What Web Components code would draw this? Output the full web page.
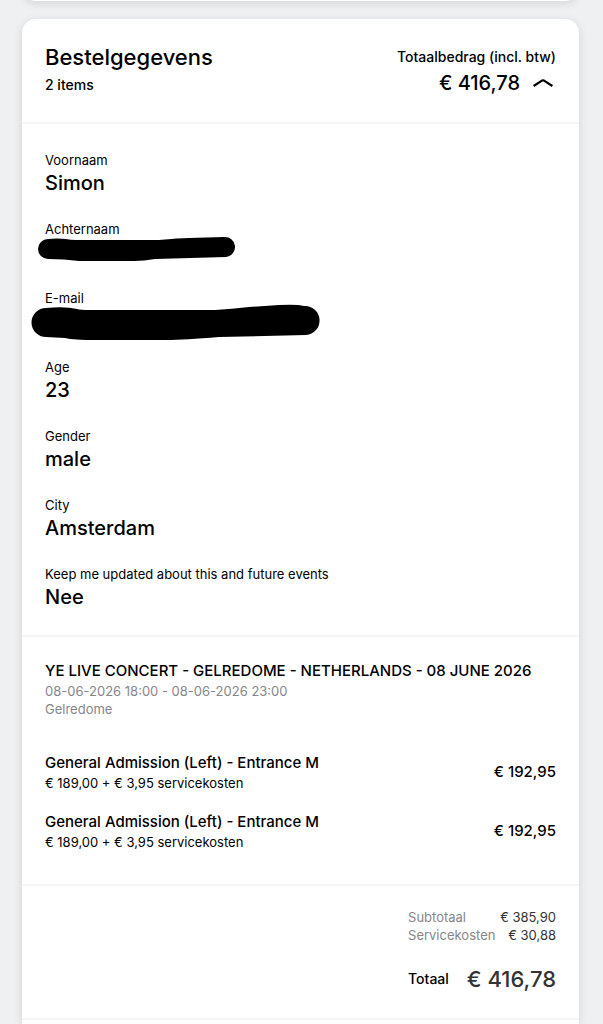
<!DOCTYPE html>
<html lang="nl">
<head>
<meta charset="utf-8">
<meta name="viewport" content="width=device-width, initial-scale=1">
<title>Bestelgegevens</title>
<style>
  body {
    margin: 0;
    background: #eff0f2;
    color: #000;
    font-family: Inter, "Liberation Sans", sans-serif;
  }
</style>
</head>
<body>
<order-page></order-page>

<script>
(() => {

  const fields = [
    { label: 'Voornaam', value: 'Simon' },
    { label: 'Achternaam', mark: 'short' },
    { label: 'E-mail', mark: 'long' },
    { label: 'Age', value: '23' },
    { label: 'Gender', value: 'male' },
    { label: 'City', value: 'Amsterdam' },
    { label: 'Keep me updated about this and future events', value: 'Nee' },
  ]

  const tickets = [
    { name: 'General Admission (Left) - Entrance M', detail: '€ 189,00 + € 3,95 servicekosten', price: '€ 192,95' },
    { name: 'General Admission (Left) - Entrance M', detail: '€ 189,00 + € 3,95 servicekosten', price: '€ 192,95' },
  ]

  const marks = {
    short: 'M19 7Q28 6 37 7Q41 8 47 8L130 8Q150 6 160 6L195 5A10 10 0 0 1 197 25L126 27Q115 29 105 29L50 29Q35 27 19 27A10 10 0 0 1 19 7Z',
    long: 'M17 7Q36 5 48 8Q52 9 60 9L186 9Q203 8 220 6L250 4Q268 3 275 5A14 14 0 0 1 277 34L190 36Q155 39 138 39L66 39Q45 39 36 37L17 36A14 14 0 0 1 17 7Z',
  }

  class OrderPage extends HTMLElement {
    constructor() {
      super()
      this.attachShadow({ mode: 'open' })
      this.shadowRoot.innerHTML = `
      <style>
        :host {
          display: flex;
          flex-direction: column;
          gap: 18px;
          min-height: 100vh;
          box-sizing: border-box;
          padding: 0 24px 0 22px;
          overflow: hidden;
        }
        .previous {
          height: 20px;
          margin-top: -19px;
        }
        .order {
          flex: 1;
        }
      </style>
      <order-card class="previous" end></order-card>
      <order-card class="order" start>
        <order-header count="2 items" amount="€ 416,78">Bestelgegevens</order-header>
        <order-section>
          ${fields.map(data => this.field(data)).join('')}
        </order-section>
        <order-section tickets>
          <order-event date="08-06-2026 18:00 - 08-06-2026 23:00" place="Gelredome">YE LIVE CONCERT - GELREDOME - NETHERLANDS - 08 JUNE 2026</order-event>
          ${tickets.map(data => this.ticket(data)).join('')}
        </order-section>
        <order-totals></order-totals>
      </order-card>
      `
    }

    field(data) {
      const value = data.mark ? `<redacted-value shape="${data.mark}"></redacted-value>` : data.value
      return `<order-field label="${data.label}">${value}</order-field>`
    }

    ticket(data) {
      return `<order-ticket detail="${data.detail}" price="${data.price}">${data.name}</order-ticket>`
    }
  }

  class OrderCard extends HTMLElement {
    constructor() {
      super()
      this.attachShadow({ mode: 'open' })
      this.shadowRoot.innerHTML = `
      <style>
        :host {
          display: block;
          background: #fff;
          box-shadow: 0 2px 10px rgba(0, 0, 0, .12);
        }
        :host([start]) {
          border-radius: 14px 14px 0 0;
        }
        :host([end]) {
          border-radius: 0 0 14px 14px;
        }
      </style>
      <slot></slot>
      `
    }
  }

  class OrderHeader extends HTMLElement {
    connectedCallback() {
      this.attachShadow({ mode: 'open' })
      this.shadowRoot.innerHTML = `
      <style>
        :host {
          display: block;
          border-bottom: 2px solid #f5f5f6;
        }
        header {
          display: flex;
          justify-content: space-between;
          padding: 24px 23px 23px;
          font-weight: 500;
        }
        h1, p {
          margin: 0;
          line-height: 28px;
        }
        h1 {
          font-size: 22px;
          font-weight: 500;
        }
        p {
          font-size: 14px;
        }
        .total {
          text-align: right;
        }
        .amount {
          display: flex;
          align-items: center;
          justify-content: flex-end;
          gap: 10px;
          font-size: 20px;
          line-height: 24px;
        }
        button {
          display: flex;
          padding: 0 3px;
          border: 0;
          background: none;
          color: inherit;
          cursor: pointer;
        }
      </style>
      <header>
        <div>
          <h1><slot></slot></h1>
          <p>${this.getAttribute('count')}</p>
        </div>
        <div class="total">
          <p>Totaalbedrag (incl. btw)</p>
          <div class="amount">
            <span>${this.getAttribute('amount')}</span>
            <button type="button" aria-label="Inklappen" aria-expanded="true">
              <svg width="20" height="10" viewBox="0 0 20 10" fill="none" stroke="currentColor" stroke-width="2.2" stroke-linejoin="round">
                <path d="M.6 8 9 2.6Q10 2.1 11 2.6L19.4 8"/>
              </svg>
            </button>
          </div>
        </div>
      </header>
      `
    }
  }

  class OrderSection extends HTMLElement {
    constructor() {
      super()
      this.attachShadow({ mode: 'open' })
      this.shadowRoot.innerHTML = `
      <style>
        :host {
          display: flex;
          flex-direction: column;
          gap: 22px;
          padding: 27px 23px 23px;
          border-bottom: 2px solid #f5f5f6;
        }
        :host([tickets]) {
          gap: 19px;
          padding: 23px 23px 33px;
        }
      </style>
      <slot></slot>
      `
    }
  }

  class OrderField extends HTMLElement {
    connectedCallback() {
      this.attachShadow({ mode: 'open' })
      this.shadowRoot.innerHTML = `
      <style>
        :host {
          display: block;
        }
        dl, dd {
          margin: 0;
        }
        dt {
          font-size: 13px;
          line-height: 18px;
        }
        dd {
          min-height: 29px;
          font-size: 20px;
          font-weight: 500;
          line-height: 29px;
        }
      </style>
      <dl>
        <dt>${this.getAttribute('label')}</dt>
        <dd><slot></slot></dd>
      </dl>
      `
    }
  }

  // marker stroke over the value, a bit larger than its line
  class RedactedValue extends HTMLElement {
    connectedCallback() {
      this.attachShadow({ mode: 'open' })
      this.shadowRoot.innerHTML = `
      <style>
        :host {
          display: block;
          position: relative;
        }
        svg {
          position: absolute;
          top: -6px;
          left: -16px;
        }
      </style>
      <svg width="300" height="42" viewBox="0 0 300 42" aria-hidden="true">
        <path d="${marks[this.getAttribute('shape')]}" fill="#000"/>
      </svg>
      `
    }
  }

  class OrderEvent extends HTMLElement {
    connectedCallback() {
      this.attachShadow({ mode: 'open' })
      this.shadowRoot.innerHTML = `
      <style>
        :host {
          display: block;
          padding-bottom: 15px;
        }
        h2, p {
          margin: 0;
        }
        h2 {
          font-size: 15px;
          font-weight: 500;
          line-height: 22px;
        }
        p {
          color: #86868a;
          font-size: 13px;
          line-height: 18px;
        }
      </style>
      <h2><slot></slot></h2>
      <p>${this.getAttribute('date')}</p>
      <p>${this.getAttribute('place')}</p>
      `
    }
  }

  class OrderTicket extends HTMLElement {
    connectedCallback() {
      this.attachShadow({ mode: 'open' })
      this.shadowRoot.innerHTML = `
      <style>
        :host {
          display: flex;
          align-items: center;
          justify-content: space-between;
          gap: 16px;
        }
        h3, p {
          margin: 0;
        }
        h3, .price {
          font-size: 15px;
          font-weight: 500;
          line-height: 22px;
        }
        p {
          font-size: 13px;
          line-height: 18px;
        }
        .price {
          white-space: nowrap;
        }
      </style>
      <div>
        <h3><slot></slot></h3>
        <p>${this.getAttribute('detail')}</p>
      </div>
      <span class="price">${this.getAttribute('price')}</span>
      `
    }
  }

  class OrderTotals extends HTMLElement {
    constructor() {
      super()
      this.attachShadow({ mode: 'open' })
      this.shadowRoot.innerHTML = `
      <style>
        :host {
          display: flex;
          justify-content: flex-end;
          padding: 22px 23px 23px;
          border-bottom: 2px solid #f5f5f6;
        }
        table, tbody, tfoot {
          display: block;
        }
        table {
          color: #333;
          font-size: 13px;
          line-height: 18px;
          white-space: nowrap;
        }
        tr {
          display: flex;
          justify-content: space-between;
          gap: 12px;
        }
        th, td {
          padding: 0;
        }
        th {
          color: #86868a;
          font-weight: 400;
        }
        tfoot {
          padding-top: 19px;
          line-height: 32px;
        }
        tfoot tr {
          gap: 18px;
        }
        tfoot th, tfoot td {
          font-weight: 500;
        }
        tfoot th {
          color: #000;
          font-size: 14px;
        }
        tfoot td {
          font-size: 22px;
        }
      </style>
      <table>
        <tbody>
          <tr><th scope="row">Subtotaal</th><td>€ 385,90</td></tr>
          <tr><th scope="row">Servicekosten</th><td>€ 30,88</td></tr>
        </tbody>
        <tfoot>
          <tr><th scope="row">Totaal</th><td>€ 416,78</td></tr>
        </tfoot>
      </table>
      `
    }
  }

  customElements.define('order-card', OrderCard)
  customElements.define('order-header', OrderHeader)
  customElements.define('order-section', OrderSection)
  customElements.define('order-field', OrderField)
  customElements.define('redacted-value', RedactedValue)
  customElements.define('order-event', OrderEvent)
  customElements.define('order-ticket', OrderTicket)
  customElements.define('order-totals', OrderTotals)
  customElements.define('order-page', OrderPage)
})()
</script>
</body>
</html>
